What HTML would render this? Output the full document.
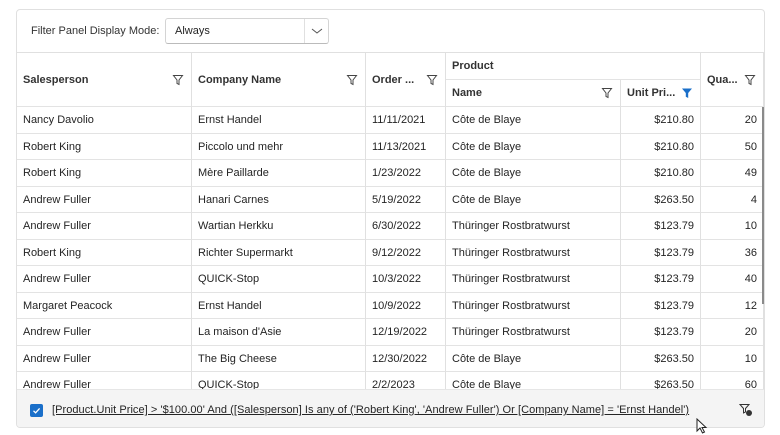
<!DOCTYPE html>
<html><head><style>
*{margin:0;padding:0;box-sizing:border-box}
body{width:780px;height:435px;background:#fff;font-family:"Liberation Sans",sans-serif;font-size:11px;color:#242424;position:relative;overflow:hidden}
.card{position:absolute;left:16px;top:9px;width:749px;height:419px;border:1px solid #e0e0e0;border-radius:4px;overflow:hidden;background:#fff}
.lbl{position:absolute;left:14px;top:15px;font-size:11px;color:#333}
.combo{position:absolute;left:148px;top:8px;width:164px;height:26px;border:1px solid #d4d4d4;border-bottom-color:#bbb;border-radius:3px;background:#fff}
.combo span{position:absolute;left:9px;top:6px}
.combo .sep{position:absolute;left:138px;top:0;width:1px;height:24px;background:#e0e0e0}
.grid{position:absolute;left:0;top:42px;width:747px;height:337px;overflow:hidden;border-top:1px solid #e0e0e0}
.c{position:absolute;border-right:1px solid #e0e0e0;border-bottom:1px solid #e3e3e3;padding:0 6px;white-space:nowrap;overflow:hidden}
.h{font-weight:bold;color:#333}
.r{text-align:right}
svg.f{position:absolute;top:50%;margin-top:-6px}
.scroll{position:absolute;left:745px;top:54px;width:2px;height:197px;background:#8a8a8a}
.foot{position:absolute;left:0;top:379px;width:747px;height:40px;background:#f4f4f4;border-top:1px solid #e6e6e6}
.cb{position:absolute;left:13px;top:14px;width:13px;height:13px;background:#1a6fc9;border-radius:2px}
.ft{position:absolute;left:35px;top:14px;text-decoration:underline;color:#242424;font-size:11px;letter-spacing:0.05px}
</style></head><body>
<div class="card">
<div class="lbl">Filter Panel Display Mode:</div>
<div class="combo"><span>Always</span><div class="sep"></div>
<svg style="position:absolute;left:145px;top:8px" width="12" height="8"><path d="M1 2 L6 6 L11 2" fill="none" stroke="#555" stroke-width="1"/></svg></div>
<div class="grid" id="g"></div>
<div class="foot"><div class="cb"><svg width="13" height="13"><path d="M3.5 6.8 L5.6 8.8 L9.6 4.4" fill="none" stroke="#fff" stroke-width="1.3"/></svg></div>
<div class="ft">[Product.Unit Price] &gt; '$100.00' And ([Salesperson] Is any of ('Robert King', 'Andrew Fuller') Or [Company Name] = 'Ernst Handel')</div>
<svg style="position:absolute;left:722px;top:13px" width="14" height="14"><path d="M1 1.5 H10 L6.5 5.5 V9 L4.5 10 V5.5 Z" fill="none" stroke="#333" stroke-width="1"/><circle cx="10" cy="10" r="3" fill="#333"/></svg>
</div>
</div>
<svg style="position:absolute;left:696px;top:418px" width="12" height="17"><path d="M1 1 V13 L4 10 L6.5 15 L8.5 14 L6 9.5 H10 Z" fill="#fff" stroke="#222" stroke-width="1"/></svg>
<script>
const g=document.getElementById('g');
const X=[0,175,349,429,604,684,747];
const fil='<svg class="f" width="12" height="12" style="right:7px"><path d="M1.5 1.5 H10.5 L7 6 V10.5 L5 9.5 V6 Z" fill="none" stroke="#444" stroke-width="1"/></svg>';
const filB='<svg class="f" width="12" height="12" style="right:7px"><path d="M1 1.5 H11 L7.2 6 V11 L4.8 9.8 V6 Z" fill="#1a6fc9"/></svg>';
function cell(x,y,w,h,html,cls){const d=document.createElement('div');d.className='c '+(cls||'');d.style.cssText=`left:${x}px;top:${y}px;width:${w}px;height:${h}px;line-height:${h}px`;d.innerHTML=html;g.appendChild(d);}
cell(0,0,175,54,'Salesperson'+fil,'h');
cell(175,0,174,54,'Company Name'+fil,'h');
cell(349,0,80,54,'Order ...'+fil,'h');
cell(429,0,255,27,'Product','h');
cell(429,27,175,27,'Name'+fil,'h');
cell(604,27,80,27,'Unit Pri...'+filB,'h');
cell(684,0,63,54,'Qua...'+fil,'h');
const rows=[["Nancy Davolio","Ernst Handel","11/11/2021","Côte de Blaye","$210.80","20"],
["Robert King","Piccolo und mehr","11/13/2021","Côte de Blaye","$210.80","50"],
["Robert King","Mère Paillarde","1/23/2022","Côte de Blaye","$210.80","49"],
["Andrew Fuller","Hanari Carnes","5/19/2022","Côte de Blaye","$263.50","4"],
["Andrew Fuller","Wartian Herkku","6/30/2022","Thüringer Rostbratwurst","$123.79","10"],
["Robert King","Richter Supermarkt","9/12/2022","Thüringer Rostbratwurst","$123.79","36"],
["Andrew Fuller","QUICK-Stop","10/3/2022","Thüringer Rostbratwurst","$123.79","40"],
["Margaret Peacock","Ernst Handel","10/9/2022","Thüringer Rostbratwurst","$123.79","12"],
["Andrew Fuller","La maison d'Asie","12/19/2022","Thüringer Rostbratwurst","$123.79","20"],
["Andrew Fuller","The Big Cheese","12/30/2022","Côte de Blaye","$263.50","10"],
["Andrew Fuller","QUICK-Stop","2/2/2023","Côte de Blaye","$263.50","60"]];
rows.forEach((r,i)=>{const y=54+i*26.5;r.forEach((t,j)=>cell(X[j],y,X[j+1]-X[j],26.5,t,j>=4?'r':''));});
const s=document.createElement('div');s.className='scroll';g.appendChild(s);
</script>
</body></html>
